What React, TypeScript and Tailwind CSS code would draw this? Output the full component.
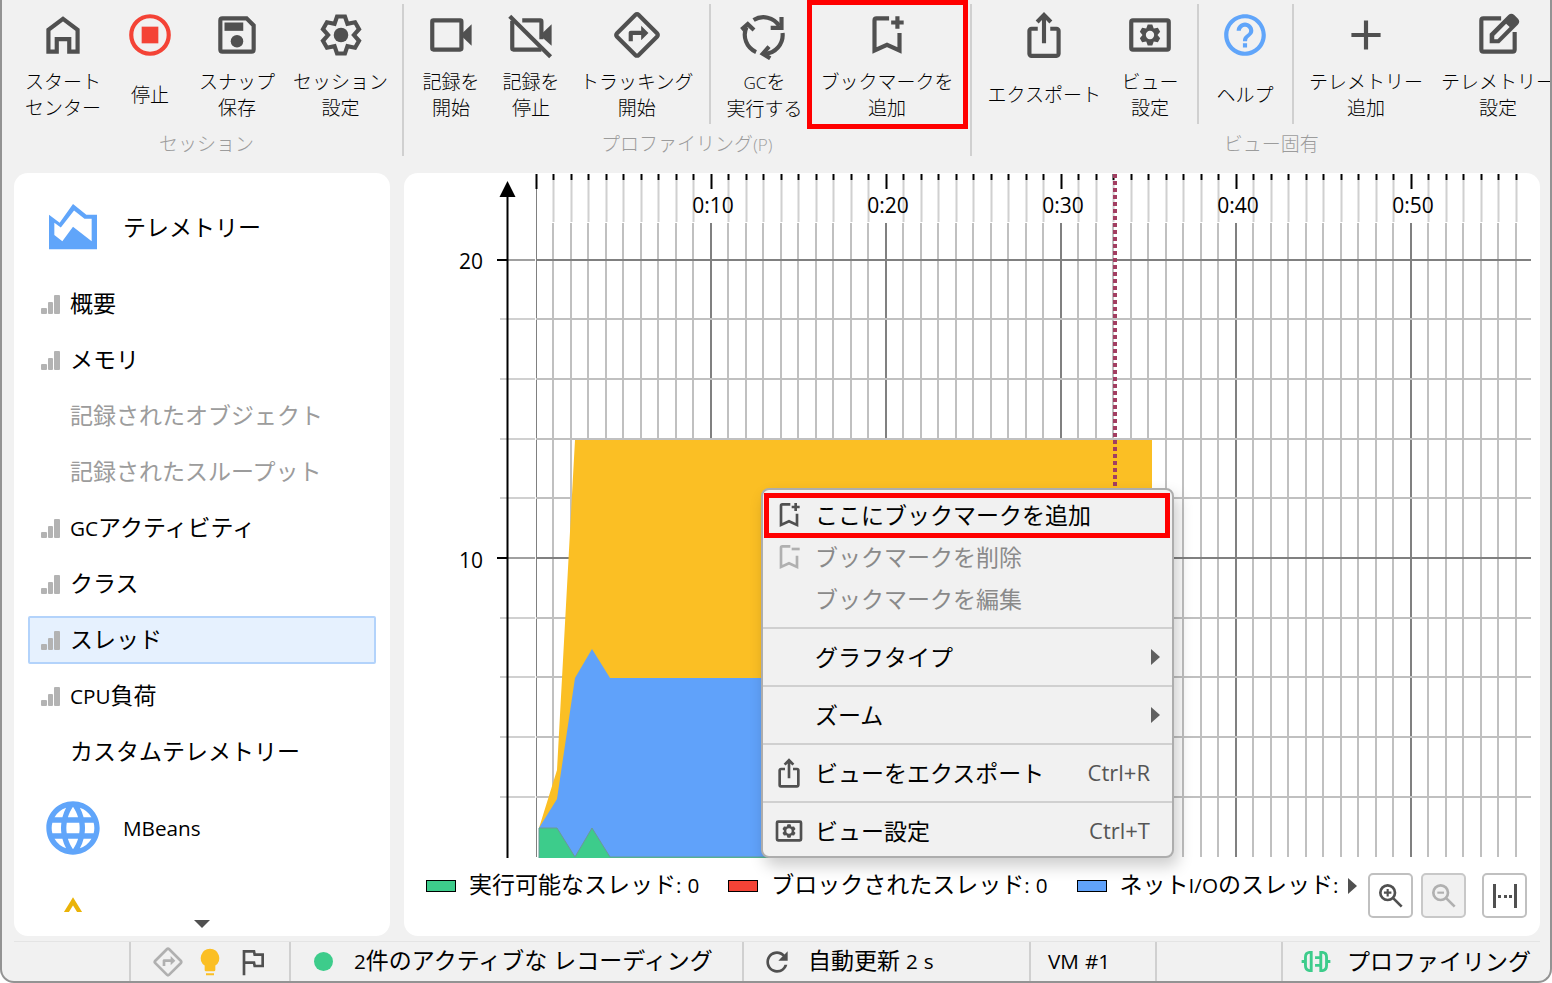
import type { ReactNode } from "react";
import { MdAdd, MdHelpOutline, MdIosShare, MdLanguage, MdOutlineDirections, MdRefresh } from "react-icons/md";

type IconProps = { className?: string };

function Svg({ className, children }: IconProps & { children: ReactNode }) {
  return (
    <svg viewBox="0 0 24 24" className={className} fill="none" stroke="currentColor" strokeWidth={2} aria-hidden="true">
      {children}
    </svg>
  );
}

// six teeth, one valley point between each pair
function gearPoints(tip: number, half: number, valley: number) {
  const pts: string[] = [];
  for (let i = 0; i < 6; i++) {
    const a = (i * Math.PI) / 3;
    const local = [
      [-half, -tip],
      [half, -tip],
      [valley * 0.5, -valley * 0.866],
    ];
    local.forEach(([x, y]) => {
      pts.push(`${12 + x * Math.cos(a) - y * Math.sin(a)},${12 + x * Math.sin(a) + y * Math.cos(a)}`);
    });
  }
  return pts.join(" ");
}

const HomeIcon = (p: IconProps) => (
  <Svg {...p}>
    <path d="M5 20V9.5l7-5.25 7 5.25V20h-4v-6H9v6z" />
  </Svg>
);

const StopIcon = (p: IconProps) => (
  <Svg {...p}>
    <circle cx="12" cy="12" r="9" />
    <rect x="8" y="8" width="8" height="8" fill="currentColor" stroke="none" />
  </Svg>
);

const SaveIcon = (p: IconProps) => (
  <Svg {...p}>
    <path d="M4 5q0-1 1-1h11.6L20 7.4V19q0 1-1 1H5q-1 0-1-1z" />
    <rect x="6" y="6" width="9" height="4" fill="currentColor" stroke="none" />
    <circle cx="12" cy="15" r="3" fill="currentColor" stroke="none" />
  </Svg>
);

const GearIcon = (p: IconProps) => (
  <Svg {...p}>
    <polygon points={gearPoints(8.9, 1.9, 6.2)} />
    <circle cx="12" cy="12" r="3.5" fill="currentColor" stroke="none" />
  </Svg>
);

const RecordIcon = (p: IconProps) => (
  <Svg {...p}>
    <rect x="3" y="5" width="14" height="14" rx="0.6" />
    <path d="M17.5 11l4.4-4.2v10.4L17.5 13z" fill="currentColor" stroke="none" />
  </Svg>
);

const RecordOffIcon = (p: IconProps) => (
  <Svg {...p}>
    <path d="M3 5.2V18.4q0 .6.6.6H17" />
    <path d="M7.8 5H16.4q.6 0 .6.6V14" />
    <path d="M17.5 11l4.4-4.2v10.4l-5.4-4.9z" fill="currentColor" stroke="none" />
    <path d="M1.8 3L21.4 22.4" />
  </Svg>
);

const CycleIcon = (p: IconProps) => (
  <Svg {...p}>
    <path d="M7 4.8a9 9 0 0 1 12.3 2.8M20.9 11a9 9 0 0 1-8.7 10M8.2 20.2A9 9 0 0 1 3.6 8.2" />
    <path d="M20.4 3.4v5.2h-5.2M1.2 9.4l3-2.6 3 2.8M14.4 17.6l-3 3.4 3.6 2.2" />
  </Svg>
);

const BookmarkIcon = ({ className, remove }: IconProps & { remove?: boolean }) => (
  <Svg className={className}>
    <path d="M13 4H7q-1 0-1 1v14.4l6-2.7 6 2.7V11" />
    <path d={remove ? "M14 6h6" : "M14 6h6M17 3v6"} />
  </Svg>
);

const ViewSettingsIcon = (p: IconProps) => (
  <Svg {...p}>
    <rect x="3" y="5" width="18" height="14" rx="0.8" />
    <path
      d={`M${gearPoints(5, 1.1, 3.6)}zM12 10a2 2 0 1 0 0 4 2 2 0 0 0 0-4z`}
      fill="currentColor"
      fillRule="evenodd"
      stroke="none"
    />
  </Svg>
);

const EditIcon = (p: IconProps) => (
  <Svg {...p}>
    <path d="M13.5 4H5q-1 0-1 1v14q0 1 1 1h14q1 0 1-1v-8.5" />
    <path
      d="M8 16v-4.6l9-9q1.4-1.2 2.8 0L21.6 4.2q1.2 1.4 0 2.8l-9 9zM10.2 14h1.6l5.8-5.8-1.7-1.6-5.7 5.7z"
      fill="currentColor"
      fillRule="evenodd"
      stroke="none"
    />
  </Svg>
);

const AreaIcon = (p: IconProps) => (
  <Svg {...p}>
    <path
      d="M17 7l-5-4-5 7-4-3v13h18V7zM19 16.95l-7-5.45L8 17l-3-2.4V10l2.44 1.83L12.4 5.4 16.3 8.5H19z"
      fill="currentColor"
      fillRule="evenodd"
      stroke="none"
    />
  </Svg>
);

const ShapesIcon = (p: IconProps) => (
  <Svg {...p}>
    <path d="M12 3.5L8 10h8z" strokeWidth={1.6} />
    <circle cx="17.5" cy="17.5" r="3.5" />
    <path d="M4 14.5h6v6H4z" />
  </Svg>
);

const FlagIcon = (p: IconProps) => (
  <Svg {...p}>
    <path d="M6 22V4h7.5l.5 2.5h6V15h-6l-.5-2.5H6" />
  </Svg>
);

const BulbIcon = (p: IconProps) => (
  <Svg {...p}>
    <path d="M12 2a7 7 0 0 0-4 12.7V18q0 1 1 1h6q1 0 1-1v-3.3A7 7 0 0 0 12 2zM9 20.5h6V22H9z" fill="currentColor" stroke="none" />
  </Svg>
);

const ZoomIcon = ({ className, out }: IconProps & { out?: boolean }) => (
  <Svg className={className}>
    <circle cx="9.5" cy="9.5" r="5.5" />
    <path d="M13.8 13.8l6.2 6.2" />
    <path d={out ? "M7 9.5h5" : "M6.7 9.5h5.6M9.5 6.7v5.6"} strokeWidth={1.6} />
  </Svg>
);

const PlugIcon = (p: IconProps) => (
  <svg viewBox="0 0 30 24" className={p.className} fill="none" stroke="currentColor" strokeWidth={3} aria-hidden="true">
    <path d="M10 1v22M10 2.5H8q-4 .5-4 5v9q0 4.5 4 5h2M0 12h4M20 1v22M20 2.5h2q4 .5 4 5v9q0 4.5-4 5h-2M26 12h4M14 8h5M14 16h5" />
  </svg>
);

const BarsIcon = (p: IconProps) => (
  <svg viewBox="0 0 19 19" className={p.className} fill="currentColor" aria-hidden="true">
    <rect x="0" y="13" width="6" height="6" rx="1" />
    <rect x="7" y="7" width="5" height="12" rx="1" />
    <rect x="13" y="0" width="6" height="19" rx="1" />
  </svg>
);

// Latin runs are set a little smaller than the kana around them
function Label({ text, className = "" }: { text: string; className?: string }) {
  return (
    <span className={`whitespace-nowrap ${className}`}>
      {text.split(/([\x21-\x7e]+)/).map((part, i) =>
        i % 2 ? (
          <span key={i} className="text-[0.9em]">
            {part}
          </span>
        ) : (
          part
        ),
      )}
    </span>
  );
}

function Tool({ icon, lines, marked }: { icon: ReactNode; lines: string[]; marked?: boolean }) {
  return (
    <button className="relative flex h-32 min-w-20 shrink-0 flex-col items-center px-[9px] pt-[10px] text-[#505050]">
      {icon}
      <span className="mt-[9px] flex h-[52px] shrink-0 flex-col justify-center text-[19px] leading-[26px] font-light text-black">
        {lines.map((l) => (
          <Label key={l} text={l} />
        ))}
      </span>
      {marked && <span className="absolute -inset-x-[5px] top-0 -bottom-px border-5 border-[#ff0000]" />}
    </button>
  );
}

const ToolDivider = () => <span className="mt-1 mr-[6px] ml-[7px] h-[120px] w-[2px] shrink-0 bg-[#d0d0d0]" />;
const GroupDivider = () => <span className="mt-1 h-[152px] w-[2px] shrink-0 bg-[#d0d0d0]" />;

function Group({ name, className, children }: { name: string; className: string; children: ReactNode }) {
  return (
    <div className={`shrink-0 ${className}`}>
      <div className="flex">{children}</div>
      <div className="pt-[3px] text-center text-[19px] leading-[26px] font-light text-[#9c9c9c]">
        <Label text={name} />
      </div>
    </div>
  );
}

function Toolbar() {
  const size = "size-[50px]";
  return (
    <header className="flex h-[173px] shrink-0 overflow-hidden">
      <Group name="セッション" className="ml-[6px] pr-[5px] pl-2">
        <Tool icon={<HomeIcon className={size} />} lines={["スタート", "センター"]} />
        <Tool icon={<StopIcon className="size-[50px] text-[#f44336]" />} lines={["停止"]} />
        <Tool icon={<SaveIcon className={size} />} lines={["スナップ", "保存"]} />
        <Tool icon={<GearIcon className={size} />} lines={["セッション", "設定"]} />
      </Group>
      <GroupDivider />
      <Group name="プロファイリング(P)" className="px-[7px]">
        <Tool icon={<RecordIcon className={size} />} lines={["記録を", "開始"]} />
        <Tool icon={<RecordOffIcon className={size} />} lines={["記録を", "停止"]} />
        <Tool icon={<MdOutlineDirections className={size} />} lines={["トラッキング", "開始"]} />
        <ToolDivider />
        <Tool icon={<CycleIcon className={size} />} lines={["GCを", "実行する"]} />
        <Tool icon={<BookmarkIcon className={size} />} lines={["ブックマークを", "追加"]} marked />
      </Group>
      <GroupDivider />
      <Group name="ビュー固有" className="px-[7px]">
        <Tool icon={<MdIosShare className={size} />} lines={["エクスポート"]} />
        <Tool icon={<ViewSettingsIcon className={size} />} lines={["ビュー", "設定"]} />
        <ToolDivider />
        <Tool icon={<MdHelpOutline className="size-[50px] text-[#60a5fa]" />} lines={["ヘルプ"]} />
        <ToolDivider />
        <Tool icon={<MdAdd className={size} />} lines={["テレメトリー", "追加"]} />
        <Tool icon={<EditIcon className={size} />} lines={["テレメトリー", "設定"]} />
      </Group>
    </header>
  );
}

const views = [
  { name: "概要", bars: true },
  { name: "メモリ", bars: true },
  { name: "記録されたオブジェクト", disabled: true },
  { name: "記録されたスループット", disabled: true },
  { name: "GCアクティビティ", bars: true },
  { name: "クラス", bars: true },
  { name: "スレッド", bars: true, active: true },
  { name: "CPU負荷", bars: true },
  { name: "カスタムテレメトリー" },
];

function Category({ icon, name }: { icon: ReactNode; name: string }) {
  return (
    <a href="#" className="flex h-24 shrink-0 items-center gap-[18px] pl-[27px]">
      {icon}
      <Label text={name} className="pb-0.5" />
    </a>
  );
}

function Sidebar() {
  return (
    <nav className="flex w-[376px] shrink-0 flex-col rounded-[14px] bg-white pt-[7px]">
      <div className="flex min-h-0 flex-1 flex-col overflow-hidden">
        <Category icon={<AreaIcon className="size-16 text-[#60a5fa]" />} name="テレメトリー" />
        {views.map((v) => (
          <a
            key={v.name}
            href="#"
            className={`mx-[14px] my-1 flex h-12 shrink-0 items-center gap-[10px] rounded-xs border-2 pl-[11px] ${
              v.active ? "border-[#b3d3fb] bg-[#e6f1fe]" : "border-transparent"
            } ${v.disabled ? "text-[#9c9c9c]" : ""}`}
          >
            <span className="w-[19px]">{v.bars && <BarsIcon className="size-[19px] text-[#b3b3b3]" />}</span>
            <Label text={v.name} className="pb-0.5" />
          </a>
        ))}
        <Category icon={<MdLanguage className="size-16 text-[#60a5fa]" />} name="MBeans" />
        <Category icon={<ShapesIcon className="size-16 text-[#eab308]" />} name="ライブメモリ" />
      </div>
      <div className="flex h-6 shrink-0 justify-center pt-2">
        <svg viewBox="0 0 16 8" className="h-2 w-4" aria-hidden="true">
          <path d="M0 0h16L8 8z" fill="#505050" />
        </svg>
      </div>
    </nav>
  );
}

const seconds = Array.from({ length: 57 }, (_, i) => i);
const rows = Array.from({ length: 10 }, (_, i) => i);

function Chart() {
  return (
    <svg className="block min-h-0 w-full flex-1 rounded-t-[14px]" role="img" aria-label="スレッド">
      {seconds.map((s) => {
        const x = Math.floor(132 + s * 17.5);
        const major = s % 10 === 0;
        return (
          <g key={s}>
            {!major && <path d={`M${x + 0.5} 7V49`} stroke="#d0d0d0" strokeWidth="2" />}
            <path d={`M${x + 0.5} 1V${major ? 16 : 7}`} stroke="#000" strokeWidth="2" />
            <path
              d={`M${x + (s === 0 ? 0.5 : 0)} ${s === 0 ? 16 : 50}V684`}
              stroke={major ? "#808080" : "#c0c0c0"}
              strokeWidth={s === 0 ? 1 : 2}
            />
          </g>
        );
      })}
      {rows.map((r) => {
        const y = Math.floor(87 + r * 59.7);
        const major = r % 5 === 0;
        return (
          <g key={r}>
            <path d={`M${major ? 93 : 96} ${y}H131`} stroke={major ? "#a0a0a0" : "#d0d0d0"} strokeWidth="2" />
            {major && <path d={`M93 ${y}H104`} stroke="#000" strokeWidth="2" />}
            <path d={`M132 ${y}H1127`} stroke={major ? "#808080" : "#c0c0c0"} strokeWidth="2" />
          </g>
        );
      })}
      <path d="M103.5 20V685" stroke="#000" strokeWidth="2" />
      <path d="M103.5 8l8 16h-16z" />
      <path d="M135 655L153 597 171 267H748V685H135z" fill="#fbbf24" />
      <path d="M135 655L153 626 171 505 188 476 206 505H748V685H135z" fill="#60a2fa" />
      <path d="M135 655h18l18 29 17-29 18 29H748v1H135z" fill="#3dcc8b" />
      <path d="M135 685V655h18l18 29 17-29 18 29H748" fill="none" stroke="#6a9a97" />
      <path d="M711 1V320" stroke="#a23e61" strokeWidth="4" strokeDasharray="4 3" />
      <g className="text-[21px]" textAnchor="middle">
        {[10, 20, 30, 40, 50].map((s) => (
          <text key={s} x={134 + s * 17.5} y={40}>
            0:{s}
          </text>
        ))}
        <text x={67} y={96}>
          20
        </text>
        <text x={67} y={395}>
          10
        </text>
      </g>
    </svg>
  );
}

type MenuItemProps = {
  icon?: ReactNode;
  text: string;
  keys?: string;
  submenu?: boolean;
  disabled?: boolean;
  marked?: boolean;
};

function MenuItem({ icon, text, keys, submenu, disabled, marked }: MenuItemProps) {
  return (
    <button
      role="menuitem"
      disabled={disabled}
      className="relative flex h-[42px] w-full items-center pr-[22px] pl-[10px] text-left text-black disabled:text-[#8a8a8a]"
    >
      <span className={`mr-[10px] w-8 ${disabled ? "text-[#b0b0b0]" : "text-[#505050]"}`}>{icon}</span>
      <Label text={text} className="flex-1" />
      {keys && <span className="pb-0.5 text-[22px] text-[#555]">{keys}</span>}
      {submenu && (
        <svg viewBox="0 0 9 16" className="-mr-[10px] h-4 w-[9px]" aria-hidden="true">
          <path d="M0 0l9 8-9 8z" fill="#606060" />
        </svg>
      )}
      {marked && <span className="absolute -top-px right-[2px] -bottom-[2px] left-px border-5 border-[#ff0000]" />}
    </button>
  );
}

const MenuLine = () => <hr className="my-[7px] h-[2px] border-0 bg-[#d0d0d0]" />;

function ContextMenu() {
  return (
    <div
      role="menu"
      className="absolute top-[315px] left-[357px] w-[413px] rounded-lg border-2 border-[#adadad] bg-[#f1f1f1] py-1 shadow-[4px_8px_16px_rgba(0,0,0,0.2)]"
    >
      <MenuItem icon={<BookmarkIcon className="size-8" />} text="ここにブックマークを追加" marked />
      <MenuItem icon={<BookmarkIcon className="size-8" remove />} text="ブックマークを削除" disabled />
      <MenuItem text="ブックマークを編集" disabled />
      <MenuLine />
      <MenuItem text="グラフタイプ" submenu />
      <MenuLine />
      <MenuItem text="ズーム" submenu />
      <MenuLine />
      <MenuItem icon={<MdIosShare className="size-8" />} text="ビューをエクスポート" keys="Ctrl+R" />
      <MenuLine />
      <MenuItem icon={<ViewSettingsIcon className="size-8" />} text="ビュー設定" keys="Ctrl+T" />
    </div>
  );
}

const legend = [
  { name: "実行可能なスレッド: 0", swatch: "bg-[#3dcc8b]" },
  { name: "ブロックされたスレッド: 0", swatch: "bg-[#f44336]" },
  { name: "ネットI/Oのスレッド:", swatch: "bg-[#60a2fa]" },
];

function Legend() {
  const box = "flex size-[45px] items-center justify-center rounded-[5px] border-2";
  return (
    <div className="flex h-[78px] shrink-0 items-start pr-[13px] pl-[22px]">
      <div className="flex min-w-0 flex-1 gap-[29px] overflow-hidden pt-2">
        {legend.map((l) => (
          <span key={l.name} className="flex shrink-0 items-center gap-[13px] leading-9">
            <span className={`h-3 w-[30px] border border-black ${l.swatch}`} />
            <Label text={l.name} className="pb-0.5" />
          </span>
        ))}
      </div>
      <svg viewBox="0 0 9 16" className="mt-5 mr-[11px] ml-1 h-4 w-[9px] shrink-0" aria-hidden="true">
        <path d="M0 0l9 8-9 8z" fill="#505050" />
      </svg>
      <div className="flex pt-[15px] text-[#505050]">
        <button aria-label="拡大" className={`${box} border-[#c0c0c0]`}>
          <ZoomIcon className="size-8" />
        </button>
        <button aria-label="縮小" disabled className={`${box} ml-2 border-[#c8c8c8] bg-[#f1f1f1] text-[#b0b0b0]`}>
          <ZoomIcon className="size-8" out />
        </button>
        <button aria-label="全体表示" className={`${box} ml-4 border-[#c0c0c0]`}>
          <svg viewBox="0 0 24 24" className="size-6" fill="currentColor" aria-hidden="true">
            <path d="M0 0h3v24H0zM21 0h3v24h-3zM5 11h3v3H5zM11 11h3v3h-3zM16 11h3v3h-3z" />
          </svg>
        </button>
      </div>
    </div>
  );
}

function StatusBar() {
  const cell = "flex shrink-0 items-center border-l-2 border-[#d0d0d0]";
  return (
    <footer className="mr-[10px] ml-3 flex h-10 shrink-0 border-t border-[#e4e4e4]">
      <div className="w-[115px] shrink-0" />
      <div className={`${cell} w-[160px] gap-[10px] pl-[21px] text-[#505050]`}>
        <MdOutlineDirections className="size-8 text-[#b0b0b0]" />
        <BulbIcon className="size-8 text-[#fbbf24]" />
        <FlagIcon className="size-8" />
      </div>
      <div className={`${cell} w-[453px] gap-[21px] pl-[23px]`}>
        <span className="size-[19px] rounded-full bg-[#3dcc8b]" />
        <Label text="2件のアクティブな レコーディング" className="pb-0.5" />
      </div>
      <div className={`${cell} w-[287px] gap-[15px] pl-[17px]`}>
        <MdRefresh className="size-8 text-[#505050]" />
        <Label text="自動更新 2 s" className="pb-0.5" />
      </div>
      <div className={`${cell} w-[126px] pl-[17px]`}>
        <Label text="VM #1" className="pb-0.5" />
      </div>
      <div className={`${cell} w-[126px]`} />
      <div className={`${cell} min-w-0 flex-1 gap-4 pl-[18px]`}>
        <PlugIcon className="h-[23px] w-[30px] shrink-0 text-[#3dcc8b]" />
        <Label text="プロファイリング" className="pb-0.5" />
      </div>
    </footer>
  );
}

export default function App() {
  return (
    <div className="h-screen bg-white">
      <div className="flex h-full flex-col overflow-hidden rounded-b-[14px] border-x-2 border-b-2 border-[#939393] bg-[#f1f1f1] font-['Open_Sans','Noto_Sans_CJK_JP',sans-serif] text-[23px] leading-8 text-black">
        <Toolbar />
        <main className="mb-[5px] flex min-h-0 flex-1 gap-[14px] pr-[10px] pl-3">
          <Sidebar />
          <section className="relative flex min-w-0 flex-1 flex-col rounded-[14px] bg-white">
            <Chart />
            <Legend />
            <ContextMenu />
          </section>
        </main>
        <StatusBar />
      </div>
    </div>
  );
}
